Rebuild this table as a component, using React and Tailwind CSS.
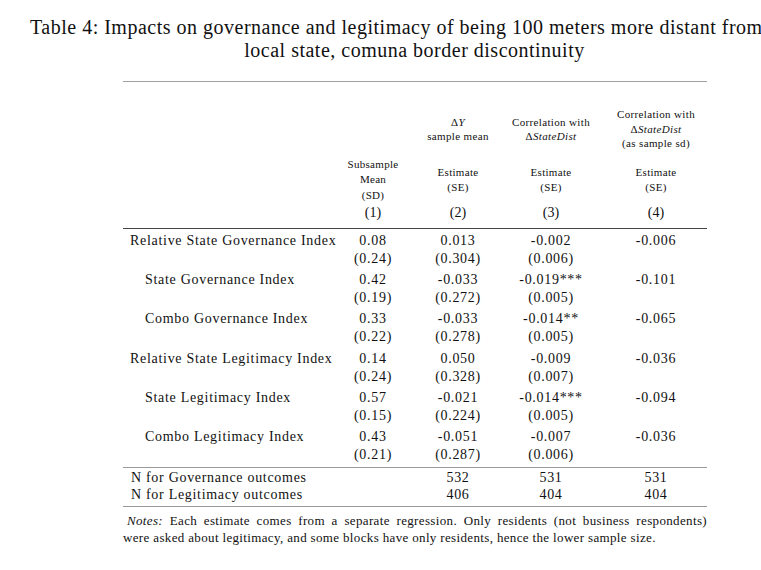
import React from "react";

const serif = { fontFamily: '"Liberation Serif", "Times New Roman", serif' };

const rows = [
  { label: "Relative State Governance Index", indent: false, m: "0.08", sd: "(0.24)", c2: "0.013", s2: "(0.304)", c3: "-0.002", s3: "(0.006)", c4: "-0.006" },
  { label: "State Governance Index", indent: true, m: "0.42", sd: "(0.19)", c2: "-0.033", s2: "(0.272)", c3: "-0.019***", s3: "(0.005)", c4: "-0.101" },
  { label: "Combo Governance Index", indent: true, m: "0.33", sd: "(0.22)", c2: "-0.033", s2: "(0.278)", c3: "-0.014**", s3: "(0.005)", c4: "-0.065" },
  { label: "Relative State Legitimacy Index", indent: false, m: "0.14", sd: "(0.24)", c2: "0.050", s2: "(0.328)", c3: "-0.009", s3: "(0.007)", c4: "-0.036" },
  { label: "State Legitimacy Index", indent: true, m: "0.57", sd: "(0.15)", c2: "-0.021", s2: "(0.224)", c3: "-0.014***", s3: "(0.005)", c4: "-0.094" },
  { label: "Combo Legitimacy Index", indent: true, m: "0.43", sd: "(0.21)", c2: "-0.051", s2: "(0.287)", c3: "-0.007", s3: "(0.006)", c4: "-0.036" },
];

const grid = "grid grid-cols-[204px_92px_78px_108px_102px]";

function Cell({ a, b }) {
  return (
    <div className="flex flex-col items-center whitespace-nowrap">
      <div className="h-[18px] leading-[18px]">{a}</div>
      <div className="h-[18px] leading-[18px]">{b}</div>
    </div>
  );
}

function Delta({ children }) {
  return (
    <span>
      Δ<i>{children}</i>
    </span>
  );
}

export default function App() {
  return (
    <div className="w-[761px] h-[570px] overflow-hidden bg-white text-[#111]" style={serif}>
      <div className="pt-[16px] text-[20px] leading-[23px] tracking-[0.5px]">
        <div className="pl-[30px] whitespace-nowrap">
          Table 4: Impacts on governance and legitimacy of being 100 meters more distant from
        </div>
        <div className="pl-[68px] text-center whitespace-nowrap">local state, comuna border discontinuity</div>
      </div>

      <div className="ml-[123px] w-[584px] mt-[19px]">
        <div className="h-px bg-[#a0a0a0]" />

        {/* header row A */}
        <div className={`${grid} h-[44px] mt-[25px] items-center text-[11px] leading-[14.5px] tracking-[0.35px] text-center`}>
          <div />
          <div />
          <div>
            <div>
              <Delta>Y</Delta>
            </div>
            <div>sample mean</div>
          </div>
          <div className="whitespace-nowrap">
            <div>Correlation with</div>
            <div>
              <Delta>StateDist</Delta>
            </div>
          </div>
          <div className="whitespace-nowrap">
            <div>Correlation with</div>
            <div>
              <Delta>StateDist</Delta>
            </div>
            <div>(as sample sd)</div>
          </div>
        </div>

        {/* header row B */}
        <div className={`${grid} h-[50px] mt-[4px] items-center text-[11px] leading-[15.5px] tracking-[0.3px] text-center`}>
          <div />
          <div>
            <div>Subsample</div>
            <div>Mean</div>
            <div>(SD)</div>
          </div>
          <div>
            <div>Estimate</div>
            <div>(SE)</div>
          </div>
          <div>
            <div>Estimate</div>
            <div>(SE)</div>
          </div>
          <div>
            <div>Estimate</div>
            <div>(SE)</div>
          </div>
        </div>

        {/* header row C */}
        <div className={`${grid} h-[16px] items-center text-[14px] leading-[16px] text-center`}>
          <div />
          <div>(1)</div>
          <div>(2)</div>
          <div>(3)</div>
          <div>(4)</div>
        </div>

        <div className="h-px bg-[#444] mt-[7px]" />

        <div className="flex flex-col gap-[3.2px] pt-[3px] text-[14px] tracking-[0.7px]">
          {rows.map((r) => (
            <div key={r.label} className={`${grid} h-[36px]`}>
              <div className={`h-[18px] leading-[18px] whitespace-nowrap ${r.indent ? "pl-[22px]" : "pl-[7px]"}`}>
                {r.label}
              </div>
              <Cell a={r.m} b={r.sd} />
              <Cell a={r.c2} b={r.s2} />
              <Cell a={r.c3} b={r.s3} />
              <Cell a={r.c4} b="" />
            </div>
          ))}
        </div>

        <div className="h-px bg-[#9a9a9a] mt-[3px]" />

        <div className="pt-[1px] text-[14px] leading-[17px] tracking-[0.7px]">
          <div className={grid}>
            <div className="pl-[8px] whitespace-nowrap">N for Governance outcomes</div>
            <div />
            <div className="text-center">532</div>
            <div className="text-center">531</div>
            <div className="text-center">531</div>
          </div>
          <div className={grid}>
            <div className="pl-[8px] whitespace-nowrap">N for Legitimacy outcomes</div>
            <div />
            <div className="text-center">406</div>
            <div className="text-center">404</div>
            <div className="text-center">404</div>
          </div>
        </div>

        <div className="h-px bg-[#9a9a9a] mt-[3px]" />

        <div className="pt-[5px] text-[13px] leading-[17px] tracking-[0.35px]">
          <div className="pl-[4px] text-justify [text-align-last:justify] whitespace-nowrap">
            <i>Notes:</i> Each estimate comes from a separate regression. Only residents (not business respondents)
          </div>
          <div className="whitespace-nowrap">
            were asked about legitimacy, and some blocks have only residents, hence the lower sample size.
          </div>
        </div>
      </div>
    </div>
  );
}
